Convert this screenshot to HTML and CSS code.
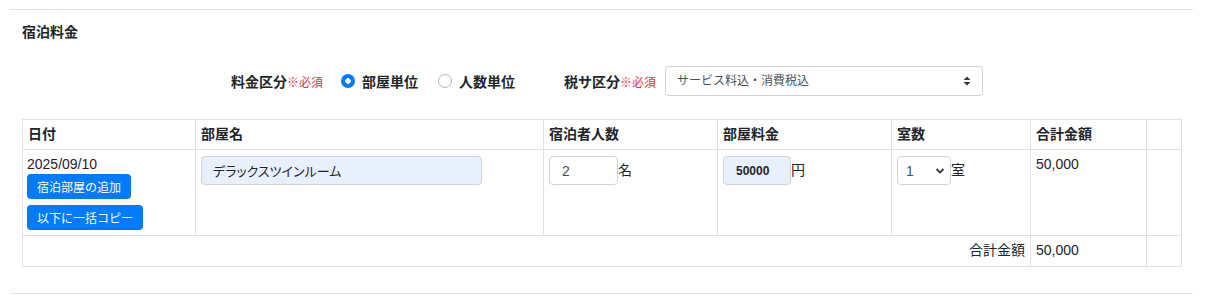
FILE: index.html
```html
<!DOCTYPE html>
<html>
<head>
<title>宿泊料金</title>
<meta charset="UTF-8">
<meta name="viewport" content="width=device-width, initial-scale=1.0">
<link rel="stylesheet" href="styles.css">
</head>
<body>
<div class="panel">
<h3 class="panel-title">宿泊料金</h3>
<div class="fee-row">
<div class="fee-group">
<span class="fee-label">料金区分<span class="req">※必須</span></span>
<label class="radio"><span class="radio-mark checked"></span>部屋単位</label>
<label class="radio"><span class="radio-mark"></span>人数単位</label>
</div>
<div class="fee-group">
<span class="fee-label">税サ区分<span class="req">※必須</span></span>
<div class="select-wrap wide">
<select class="form-select">
<option>サービス料込・消費税込</option>
</select>
<svg class="select-icon" width="8" height="10" viewBox="0 0 8 10"><path d="M4 0.5 L7.5 4 H0.5 Z M4 9.5 L7.5 6 H0.5 Z" fill="#343a40"/></svg>
</div>
</div>
</div>
<table class="rate-table">
<colgroup>
<col style="width:173px">
<col style="width:348px">
<col style="width:174px">
<col style="width:174px">
<col style="width:139px">
<col style="width:116px">
<col style="width:35px">
</colgroup>
<thead>
<tr>
<th>日付</th>
<th>部屋名</th>
<th>宿泊者人数</th>
<th>部屋料金</th>
<th>室数</th>
<th>合計金額</th>
<th></th>
</tr>
</thead>
<tbody>
<tr class="body-row">
<td class="date-cell">
<div class="date">2025/09/10</div>
<button class="btn">宿泊部屋の追加</button>
<button class="btn">以下に一括コピー</button>
</td>
<td><input class="form-input room filled" type="text" value="デラックスツインルーム"></td>
<td><div class="unit-field"><input class="form-input small" type="text" value="2">名</div></td>
<td><div class="unit-field"><input class="form-input small filled price" type="text" value="50000">円</div></td>
<td>
<div class="unit-field">
<div class="select-wrap count">
<select class="form-select">
<option>1</option>
</select>
<svg class="select-icon" width="10" height="7" viewBox="0 0 10 7"><path d="M1.5 1.5 L5 5 L8.5 1.5" fill="none" stroke="#343a40" stroke-width="1.8"/></svg>
</div>室
</div>
</td>
<td>50,000</td>
<td></td>
</tr>
<tr class="foot-row">
<td colspan="5" class="sum-label">合計金額</td>
<td>50,000</td>
<td></td>
</tr>
</tbody>
</table>
</div>
</body>
</html>
```

FILE: styles.css
```css
body {
    margin: 0;
    font-family: "Liberation Sans", "Noto Sans CJK JP", sans-serif;
    font-size: 14px;
    color: #212529;
    background: #fff;
}
.panel {
    margin: 9px 13px 0 10px;
    padding: 12px 12px 26px;
    border-top: 1px solid #dee2e6;
    border-bottom: 1px solid #dee2e6;
}
.panel-title {
    margin: 0;
    font-size: 14px;
    line-height: 20px;
    font-weight: bold;
}
.fee-row {
    display: flex;
    align-items: center;
    gap: 49px;
    height: 30px;
    margin-top: 24px;
    padding-left: 209px;
}
.fee-group {
    display: flex;
    align-items: center;
}
.fee-label {
    font-weight: bold;
    margin-right: 6px;
}
.fee-group .select-wrap {
    margin-left: 3px;
}
.req {
    color: #dc3545;
    font-size: 12px;
    font-weight: normal;
}
.radio {
    display: flex;
    align-items: center;
    font-weight: bold;
    margin-left: 12px;
}
.radio + .radio {
    margin-left: 20px;
}
.radio-mark {
    width: 12px;
    height: 12px;
    border: 1px solid #adb5bd;
    border-radius: 50%;
    margin-right: 7px;
    background: #fff;
}
.radio-mark.checked {
    width: 14px;
    height: 14px;
    border: none;
    background: radial-gradient(circle, #fff 0 2.5px, #007bff 3px);
}
.select-wrap {
    position: relative;
    display: inline-block;
}
.form-select {
    appearance: none;
    -webkit-appearance: none;
    height: 30px;
    border: 1px solid #ced4da;
    border-radius: 4px;
    background: #fff;
    color: #495057;
    font-family: inherit;
    font-size: 12px;
    padding: 0 24px 0 11px;
}
.wide .form-select {
    width: 318px;
}
.count .form-select {
    width: 54px;
    height: 29px;
    font-size: 14px;
    padding-left: 8px;
}
.select-icon {
    position: absolute;
    top: 50%;
    transform: translateY(-50%);
    pointer-events: none;
}
.wide .select-icon {
    right: 12px;
}
.count .select-icon {
    right: 6px;
}
.rate-table {
    margin-top: 23px;
    width: 1159px;
    table-layout: fixed;
    border-collapse: collapse;
}
.rate-table th,
.rate-table td {
    border: 1px solid #dee2e6;
    padding: 6px 5px 5px;
    text-align: left;
    line-height: 17px;
}
.rate-table th {
    padding: 6px 5px;
    vertical-align: middle;
}
.body-row td {
    vertical-align: top;
}
.rate-table .date-cell {
    padding-left: 4px;
}
.rate-table .foot-row td {
    padding: 6px 5px 7px;
    vertical-align: top;
}
.sum-label {
    text-align: right !important;
}
.date {
    margin-bottom: 1px;
}
.btn {
    display: block;
    height: 25px;
    padding: 0 10px;
    border: none;
    border-radius: 4px;
    background-color: #007bff;
    color: #fff;
    font-family: inherit;
    font-size: 12px;
    cursor: pointer;
}
.btn + .btn {
    margin-top: 6px;
}
.form-input {
    box-sizing: border-box;
    height: 29px;
    border: 1px solid #ced4da;
    border-radius: 4px;
    background: #fff;
    color: #495057;
    font-family: inherit;
    font-size: 14px;
    padding: 0 12px;
}
.form-input.filled {
    background: #e8f0fe;
    color: #212529;
}
.room {
    width: 281px;
    font-size: 13px;
    font-feature-settings: "palt";
    padding-left: 11px;
}
.small {
    width: 69px;
}
.price {
    width: 68px;
    font-size: 12px;
    font-weight: bold;
}
.unit-field {
    display: flex;
    align-items: center;
}
```
